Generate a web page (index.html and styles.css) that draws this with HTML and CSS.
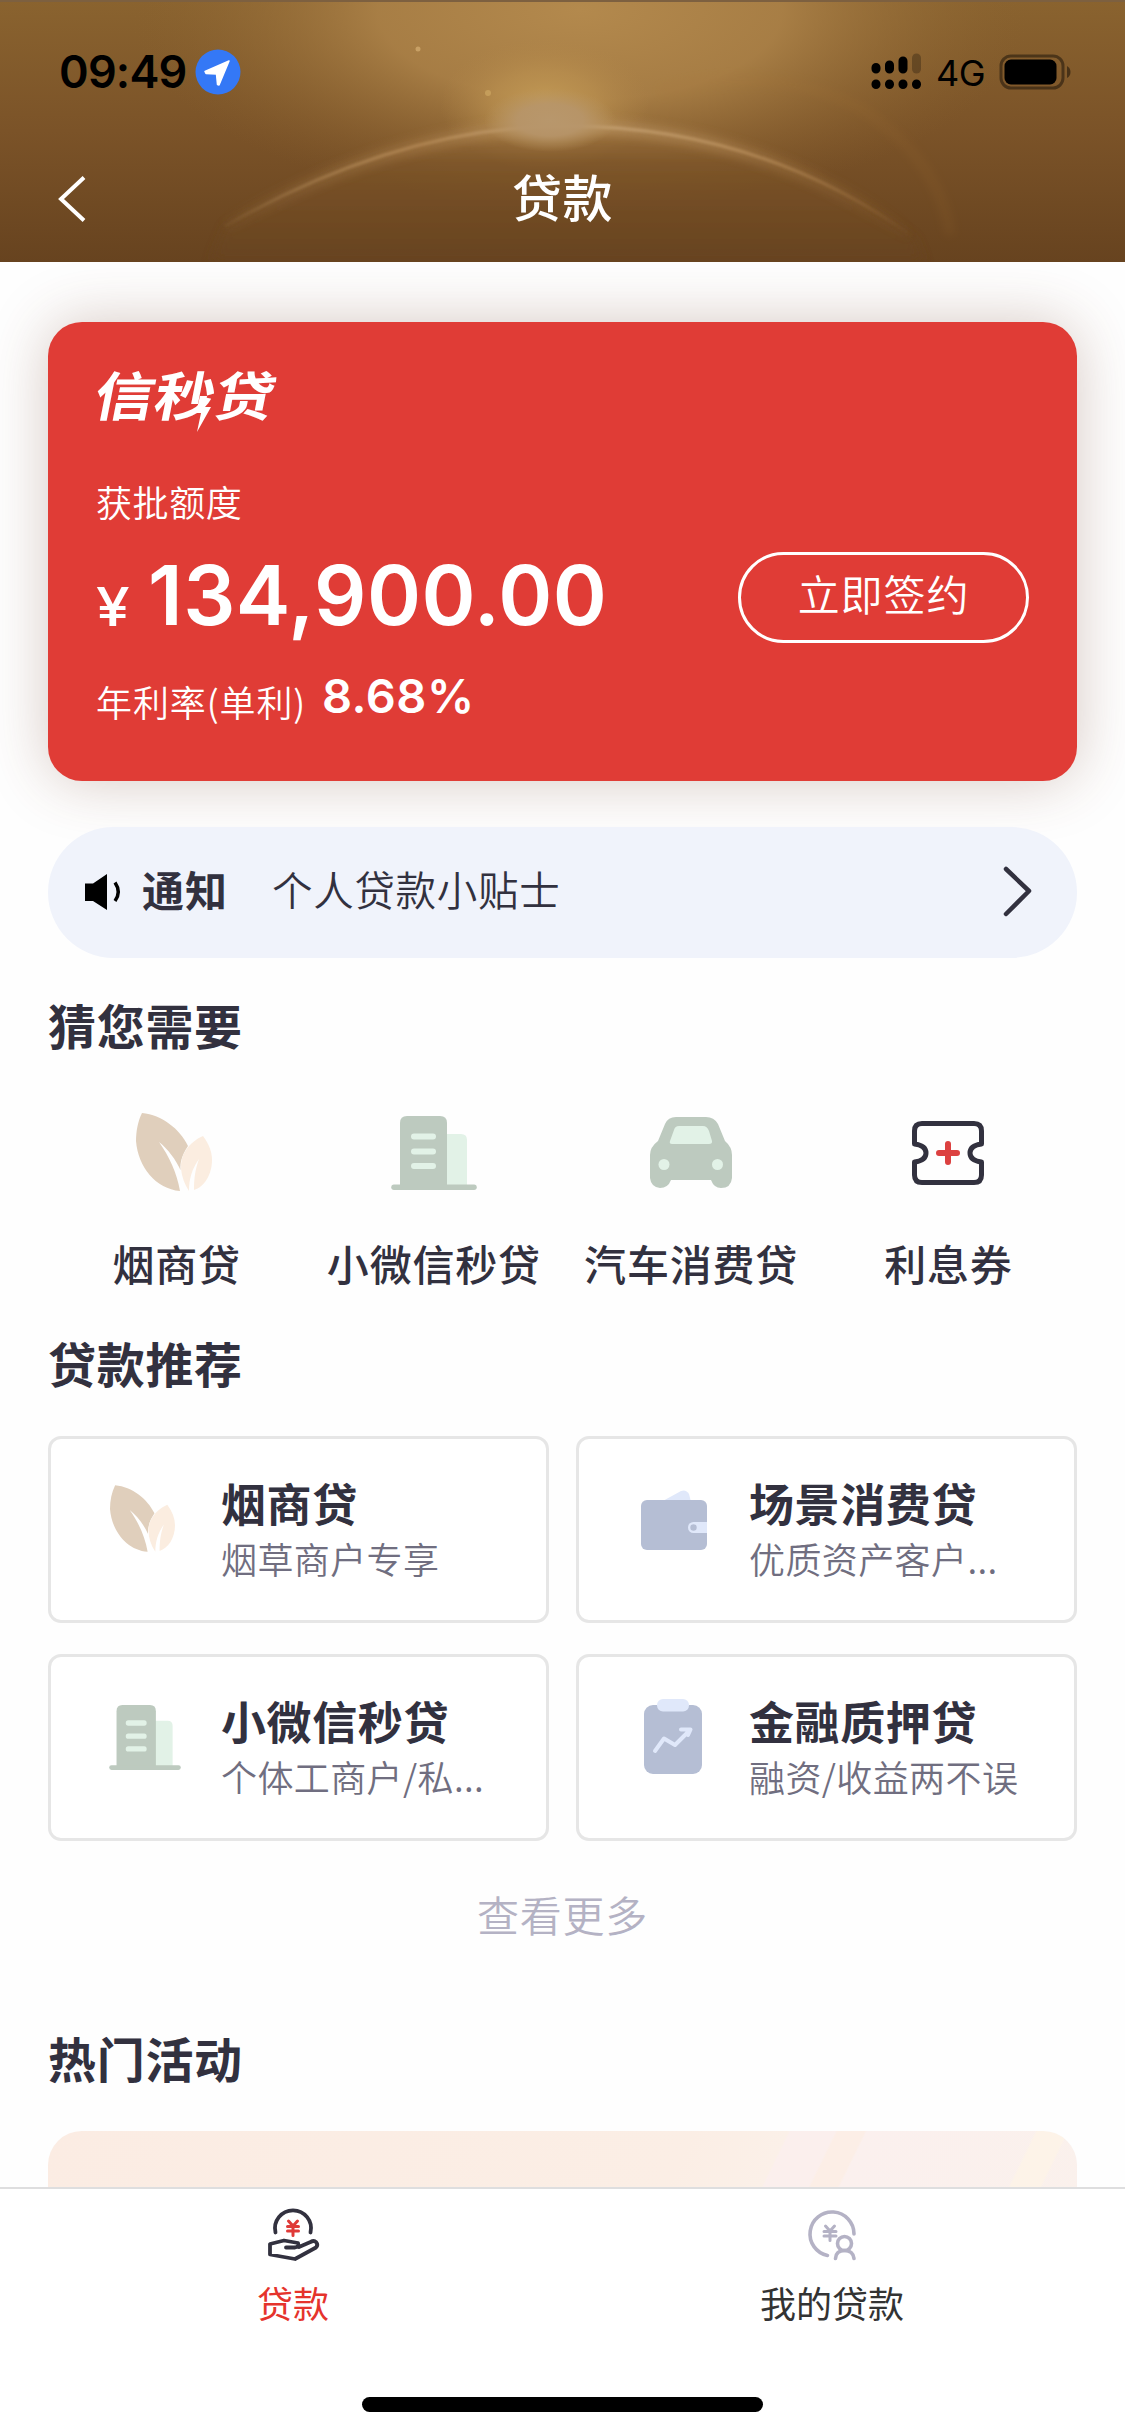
FILE: index.html
```html
<!DOCTYPE html>
<html lang="zh-CN">
<head>
<meta charset="utf-8">
<title>贷款</title>
<link rel="stylesheet" href="styles.css">
</head>
<body>
<svg width="0" height="0" class="defs" aria-hidden="true">
  <symbol id="leaf" viewBox="0 0 76 78">
    <path fill="#e0cfbc" d="M6 0C26 2 44 16 52 33C46 42 44 49 44.500 57C40 47 32 36 23 29C33 43 41 60 44 78C20 76 2 54 0 28C0 18 2 8 6 0Z"/>
    <path fill="#fbede0" d="M67 23C73 31 76 39 76 47C76 62 68 74 58 77C58 66 59 57 63 46C56 56 53 66 53 78C44 64 42 48 50 37C54 31 60 26 67 23Z"/>
  </symbol>
  <symbol id="building" viewBox="0 0 86 74">
    <path fill="#e2f2e7" d="M50 18H70Q76 18 76 24V70H50Z"/>
    <path fill="#bdcabf" d="M9 70V7Q9 0 16 0H49Q56 0 56 7V70Z"/>
    <path stroke="#bdcabf" stroke-width="5.500" stroke-linecap="round" d="M3 71.200H83"/>
    <path stroke="#e2f2e7" stroke-width="6" stroke-linecap="round" d="M23 20.500H42M23 35.500H42M23 50H42"/>
  </symbol>
</svg>

<header class="header">
  <svg class="sky" viewBox="0 0 1125 262" preserveAspectRatio="none" aria-hidden="true">
    <defs>
      <linearGradient id="base" x1="0" y1="0" x2="0" y2="1">
        <stop offset="0" stop-color="#8a632f"/><stop offset=".5" stop-color="#7b5328"/><stop offset="1" stop-color="#67431f"/>
      </linearGradient>
      <radialGradient id="top" gradientUnits="userSpaceOnUse" cx="0" cy="0" r="1" gradientTransform="translate(580 10) scale(450 200)">
        <stop offset="0" stop-color="#b3894d"/><stop offset=".45" stop-color="#ad8349" stop-opacity=".85"/><stop offset="1" stop-color="#8a622f" stop-opacity="0"/>
      </radialGradient>
      <radialGradient id="halo"><stop offset="0" stop-color="#c39b56"/><stop offset=".5" stop-color="#bb9150" stop-opacity=".65"/><stop offset="1" stop-color="#b08548" stop-opacity="0"/></radialGradient>
      <radialGradient id="sun"><stop offset="0" stop-color="#b8976c"/><stop offset=".5" stop-color="#b7956a" stop-opacity=".9"/><stop offset="1" stop-color="#b7935f" stop-opacity="0"/></radialGradient>
      <linearGradient id="planet" x1="0" y1="0" x2="0" y2="1"><stop offset="0" stop-color="#a0753f"/><stop offset=".28" stop-color="#7d5529"/><stop offset="1" stop-color="#67431f"/></linearGradient>
      <linearGradient id="rim" gradientUnits="userSpaceOnUse" x1="210" y1="0" x2="915" y2="0"><stop offset="0" stop-color="#c19a68" stop-opacity="0"/><stop offset=".3" stop-color="#b08552" stop-opacity=".8"/><stop offset=".5" stop-color="#c3a071"/><stop offset=".72" stop-color="#b58c5a" stop-opacity=".9"/><stop offset="1" stop-color="#a87945" stop-opacity="0"/></linearGradient>
      <filter id="soft" x="-10%" y="-30%" width="120%" height="160%"><feGaussianBlur stdDeviation="5"/></filter>
      <filter id="fine" x="-10%" y="-30%" width="120%" height="160%"><feGaussianBlur stdDeviation="1"/></filter>
    </defs>
    <rect width="1125" height="262" fill="url(#base)"/>
    <rect width="1125" height="262" fill="url(#top)"/>
    <ellipse cx="545" cy="104" rx="105" ry="66" fill="url(#halo)"/>
    <path d="M210 262L225 226Q400 126 565 126Q760 126 915 238L925 262Z" fill="url(#planet)" opacity=".7" filter="url(#soft)"/>
    <path d="M225 226Q400 126 565 126Q760 126 915 238" fill="none" stroke="url(#rim)" stroke-width="14" opacity=".55" filter="url(#soft)"/>
    <path d="M225 226Q400 126 565 126Q760 126 915 238" fill="none" stroke="url(#rim)" stroke-width="3.500" filter="url(#fine)"/>
    <ellipse cx="550" cy="120" rx="66" ry="32" fill="url(#sun)"/>
    <path d="M660 92Q770 62 860 108Q940 160 950 235" fill="none" stroke="#a87638" stroke-width="10" opacity=".12" filter="url(#soft)"/>
    <circle cx="418" cy="49" r="2.500" fill="#d0a96d" opacity=".8"/><circle cx="488" cy="93" r="3" fill="#cda662" opacity=".7"/>
    <rect width="1125" height="2" fill="#7d6040"/>
  </svg>
  <div class="status">
    <span class="clock">09:49</span>
    <svg class="locate" width="46" height="46" viewBox="0 0 46 46"><circle cx="23" cy="23" r="22.500" fill="#3478f6"/><path fill="#fff" stroke="#fff" stroke-width="1.500" stroke-linejoin="round" d="M34 12L10 22.500L11 24.500L21.500 25L22.500 35.500L24 36Z"/></svg>
    <svg class="signal" width="52" height="38" viewBox="0 0 52 38">
      <g stroke="#000" stroke-width="9" stroke-linecap="round"><path d="M5 14.500V16M18.500 12V16M32 8V16M5 31V31.500M18.500 31V31.500M32 31V31.500M45.500 31V31.500"/><path opacity=".25" d="M45.500 5V16"/></g>
    </svg>
    <span class="network">4G</span>
    <svg class="battery" width="74" height="36" viewBox="0 0 74 36"><rect x="2" y="2" width="62" height="32" rx="10" fill="none" stroke="#000" stroke-opacity=".42" stroke-width="3"/><rect x="5.500" y="5.500" width="52" height="25" rx="6.500"/><path fill-opacity=".45" d="M68 12Q71.500 14 71.500 18Q71.500 22 68 24Z"/></svg>
  </div>
  <div class="nav">
    <svg width="32" height="50" viewBox="0 0 32 50"><path d="M27 3.500L4 25L27 46.500" fill="none" stroke="#fff" stroke-width="4"/></svg>
    <h1 class="title">贷款</h1>
  </div>
</header>

<main class="main">
  <section class="credit">
    <div class="brand"><span class="brand-text">信秒贷</span><svg class="bolt" width="18" height="36" viewBox="0 0 18 36"><path fill="#fff" d="M5 0H12L10 11H16L2 36L6 17H1Z"/></svg></div>
    <p class="credit-label">获批额度</p>
    <div class="amount-row">
      <p class="amount"><span class="yen">¥</span><span class="sum">134,900.00</span></p>
      <button class="sign">立即签约</button>
    </div>
    <p class="rate"><span class="rate-label">年利率(单利)</span><span class="rate-value">8.68%</span></p>
  </section>

  <section class="notice">
    <svg class="speaker" width="38" height="38" viewBox="0 0 38 38"><path d="M0 10.500H8L22 1V37L8 28H0Z"/><path d="M30 9.500Q36.500 19 30 28" fill="none" stroke="#000" stroke-width="3.500"/></svg>
    <strong class="notice-tag">通知</strong>
    <span class="notice-text">个人贷款小贴士</span>
    <svg class="chevron" width="30" height="54" viewBox="0 0 30 54"><path d="M4 5L27 27L4 50" fill="none" stroke="#32313f" stroke-width="4.500" stroke-linecap="round" stroke-linejoin="round"/></svg>
  </section>

  <h2 class="heading">猜您需要</h2>
  <ul class="quick">
    <li class="quick-item"><span class="quick-icon"><svg class="q-leaf" width="76" height="78"><use href="#leaf"/></svg></span>烟商贷</li>
    <li class="quick-item"><span class="quick-icon"><svg width="86" height="74"><use href="#building"/></svg></span>小微信秒贷</li>
    <li class="quick-item"><span class="quick-icon"><svg width="82" height="71" viewBox="0 0 82 71">
      <path fill="#bdcabf" d="M26 0H56Q64 0 68 7L75 24Q82 30 82 38V61Q81 71 71 71Q64 71 61 63H21Q18 71 10 71Q1 70 0 61V38Q0 30 8 24L15 7Q18 0 26 0Z"/>
      <path fill="#e2f2e7" d="M29 9H53Q57 9 59 14L62 24Q62.500 27 59 27H22Q19 27 20 24L24 13Q25 9 29 9Z"/><circle cx="14" cy="47.500" r="5.500" fill="#e2f2e7"/><circle cx="67.500" cy="47.500" r="5.500" fill="#e2f2e7"/></svg></span>汽车消费贷</li>
    <li class="quick-item"><span class="quick-icon"><svg width="72" height="64" viewBox="0 0 72 64">
      <path fill="none" stroke="#32313f" stroke-width="5" stroke-linejoin="round" d="M10 2.500H62Q69.500 2.500 69.500 10V23Q58 24.500 58 32Q58 39.500 69.500 41V54Q69.500 61.500 62 61.500H10Q2.500 61.500 2.500 54V41Q14 39.500 14 32Q14 24.500 2.500 23V10Q2.500 2.500 10 2.500Z"/>
      <path stroke="#dc4140" stroke-width="6" stroke-linecap="round" d="M27 32H45M36 23V41"/></svg></span>利息券</li>
  </ul>

  <h2 class="heading heading-rec">贷款推荐</h2>
  <div class="products">
    <article class="product"><span class="product-icon"><svg class="p-leaf" width="65" height="67"><use href="#leaf"/></svg></span>
      <div class="product-body"><h3 class="product-name">烟商贷</h3><p class="product-desc">烟草商户专享</p></div></article>
    <article class="product"><span class="product-icon"><svg class="p-wallet" width="66" height="60" viewBox="0 0 66 60"><path fill="#e0e8fa" d="M20 12L40 1Q45-1 48 4L50 12Z"/><rect y="10" width="66" height="50" rx="6" fill="#b5bed4"/><path fill="#e0e8fa" d="M66 32H52.500A5.500 5.500 0 0 0 52.500 43H66Z"/><circle cx="52.500" cy="37.500" r="3.200" fill="#b5bed4"/></svg></span>
      <div class="product-body"><h3 class="product-name">场景消费贷</h3><p class="product-desc">优质资产客户...</p></div></article>
    <article class="product"><span class="product-icon"><svg class="p-building" width="72" height="65" viewBox="0 0 86 74" preserveAspectRatio="none"><use href="#building" width="86" height="74"/></svg></span>
      <div class="product-body"><h3 class="product-name">小微信秒贷</h3><p class="product-desc">个体工商户/私...</p></div></article>
    <article class="product"><span class="product-icon"><svg class="p-board" width="58" height="75" viewBox="0 0 58 75"><rect y="6" width="58" height="69" rx="9" fill="#b5bed4"/><rect x="13" width="32" height="12.500" rx="6" fill="#e0e8fa"/><path fill="none" stroke="#e0e8fa" stroke-width="4" stroke-linecap="round" stroke-linejoin="round" d="M11 52L20 39.500L31 46L46 31M37 30.500H46.500L44 36"/></svg></span>
      <div class="product-body"><h3 class="product-name">金融质押贷</h3><p class="product-desc">融资/收益两不误</p></div></article>
  </div>
  <p class="more">查看更多</p>

  <h2 class="heading heading-hot">热门活动</h2>
  <div class="banner"></div>
</main>

<footer class="tabbar">
  <div class="tabs">
    <div class="tab tab-on">
      <svg width="54" height="54" viewBox="0 0 54 54"><g fill="none" stroke="#32313f" stroke-width="3.800" stroke-linecap="round" stroke-linejoin="round"><path d="M9.500 25.500A18 18 0 1 1 44.500 25.500"/><path d="M20 40.500H29Q33.500 39.500 32 36L18 33.500L4 37V47.500L29 52L50 40.500Q52.500 38 50 35Q48 33 44.500 35L33 40"/></g><path fill="none" stroke="#df3a38" stroke-width="3" stroke-linecap="round" d="M22.500 14L27 19L31.500 14M21.500 19.500H32.500M21.500 24H32.500M27 19V28.500"/></svg>
      <span class="tab-label">贷款</span>
    </div>
    <div class="tab">
      <svg width="54" height="54" viewBox="0 0 54 54"><g fill="none" stroke="#b4b2c5" stroke-width="3.600" stroke-linecap="round"><path d="M49 27A22 22 0 1 0 22.500 48.500"/><circle cx="39.500" cy="36.500" r="7"/><path d="M30.500 51.500Q31 43.500 39.500 43.500Q48 43.500 49 51.500"/><path stroke-width="3" d="M20.500 19L25 24L29.500 19M19 24.500H31M19 29H31M25 24V33.500"/></g></svg>
      <span class="tab-label">我的贷款</span>
    </div>
  </div>
  <div class="home"></div>
</footer>
</body>
</html>
```
FILE: styles.css
```css
* { box-sizing: border-box; margin: 0; padding: 0; }

body {
  width: 1125px;
  height: 2435px;
  display: flex;
  flex-direction: column;
  overflow: hidden;
  background: #fefefe;
  color: #32313f;
  font-family: "Noto Sans CJK SC", sans-serif;
  letter-spacing: 0.6px;
}
svg { display: block; flex: none; overflow: visible; }
.defs { position: absolute; }

.header { position: relative; flex: none; height: 262px; }
.sky { position: absolute; inset: 0; width: 1125px; height: 262px; overflow: hidden; }
.status, .nav { position: relative; display: flex; align-items: center; }
.status { height: 144px; padding-left: 59px; color: #000; font-family: Inter, sans-serif; }
.clock { width: 137px; padding-bottom: 1px; font-size: 45px; font-weight: 600; letter-spacing: -0.8px; }
.locate { margin-left: -1px; }
.signal { margin-left: 630px; }
.network { width: 76px; padding: 2px 0 0 13px; font-size: 36px; font-weight: 400; letter-spacing: -0.6px; }
.battery { margin-top: -1px; }
.nav { height: 110px; padding-left: 57px; }
.title { margin-left: 423px; color: #fff; font-size: 50px; font-weight: 500; line-height: 70px; letter-spacing: 0.6px; transform: translateY(-4px); }

.main { flex: none; height: 1925px; overflow: hidden; padding: 60px 48px 0; }

.credit {
  height: 459px;
  padding: 36px 48px 0;
  border-radius: 34px;
  background: #e03c36;
  box-shadow: 0 0 60px rgba(110, 60, 40, 0.28);
  color: #fff;
}
.brand { position: relative; width: 200px; height: 70px; }
.brand-text { display: block; font-size: 60px; line-height: 70px; font-weight: 700; letter-spacing: 0; transform: skewX(-11deg) scaleY(0.88); }
.bolt { position: absolute; left: 99px; top: 38px; }
.credit-label { margin-top: 48px; font-size: 36px; line-height: 50px; font-weight: 350; }
.amount-row { display: flex; justify-content: space-between; margin-top: 26px; }
.amount { display: flex; align-items: baseline; height: 90px; line-height: 87px; font-family: Inter, sans-serif; }
.yen { width: 52px; font-size: 54px; font-weight: 500; letter-spacing: 0; transform: translateY(1px) scaleX(1.12); transform-origin: 0 50%; }
.sum { font-size: 82px; font-weight: 600; letter-spacing: 0.5px; }
.sign {
  width: 291px; height: 91px; padding-bottom: 10px;
  border: 3px solid #fff; border-radius: 46px; background: none;
  color: #fff; font: 350 42px "Noto Sans CJK SC", sans-serif; letter-spacing: 0.9px;
}
.rate { display: flex; align-items: center; margin-top: 25px; height: 60px; }
.rate-label { width: 226px; padding-top: 6px; font-size: 36px; line-height: 50px; font-weight: 350; letter-spacing: 0.9px; }
.rate-value { padding-bottom: 6px; font-family: Inter, sans-serif; font-size: 47px; font-weight: 600; letter-spacing: 0.5px; }

.notice {
  display: flex; align-items: center;
  height: 131px; margin-top: 46px; padding: 0 45px 0 37px;
  border-radius: 66px; background: #f0f3fb; position: relative;
}
.speaker { margin-top: -1px; }
.chevron { margin-top: -3px; }
.notice-tag { margin-left: 19px; font-size: 42px; line-height: 60px; font-weight: 600; letter-spacing: 1px; transform: translateY(-4px); }
.notice-text { flex: 1; margin-left: 44px; font-size: 40.500px; line-height: 60px; font-weight: 350; letter-spacing: 0.7px; transform: translateY(-4px); }

.heading { margin-top: 31px; font-size: 48px; line-height: 70px; font-weight: 600; letter-spacing: 0.7px; }
.quick { display: grid; grid-template-columns: repeat(4, 1fr); margin-top: 32px; list-style: none; }
.quick-item { display: flex; flex-direction: column; align-items: center; height: 206px; font-size: 42px; line-height: 60px; font-weight: 500; letter-spacing: 0.8px; white-space: nowrap; }
.quick-icon { display: flex; align-items: center; height: 123px; margin-bottom: 19px; }
.q-leaf { margin: -2px 0 0 -6px; }

.heading-rec { margin-top: 30px; }
.products { display: grid; grid-template-columns: 501px 501px; gap: 31px 27px; margin-top: 39px; }
.product { display: flex; height: 187px; padding: 34px 0 0 42px; border: 3px solid #e6e6e6; border-radius: 13px; background: #fff; }
.product-icon { display: flex; align-items: center; justify-content: center; width: 108px; height: 92px; margin-right: 20px; }
.p-leaf { margin: -1px 0 0 -10px; }
.p-wallet { margin: 2px 0 0 -3px; }
.p-building { margin: 0 0 0 -4px; }
.p-board { margin: -2px 0 0 -4px; }
.product-name { font-size: 45px; line-height: 60px; font-weight: 600; letter-spacing: 0.6px; }
.product-desc { font-size: 36px; line-height: 50px; font-weight: 350; letter-spacing: 0.4px; color: #706e80; }
.more { margin-top: 45px; text-align: center; font-size: 42px; line-height: 56px; font-weight: 350; letter-spacing: 0.8px; color: #b4b2c4; }

.heading-hot { margin-top: 80px; }
.banner {
  height: 300px; margin-top: 39px; border-radius: 34px;
  background:
    linear-gradient(116deg, transparent 84%, #fdf3e8 84.200%, #fdf3e8 86.700%, transparent 86.900%),
    linear-gradient(116deg, #fbece3, #fbeee5 55%, #fbf0e8 63%, #fbefed 63.200%, #fbefed 67%, #fceee6 67.200%, #fceee6 69.500%, #fbf0ee 69.700%, #faf1eb);
}

.tabbar { flex: none; display: flex; flex-direction: column; align-items: center; height: 248px; border-top: 2px solid #dededf; background: #fff; }
.tabs { display: flex; width: 1078px; height: 208px; padding-top: 18px; }
.tab { flex: 1; display: flex; flex-direction: column; align-items: center; color: #333; }
.tab-label { margin-top: 14px; font-size: 36px; line-height: 54px; font-weight: 400; letter-spacing: 0; }
.tab-on .tab-label { color: #e5332c; }
.home { width: 401px; height: 15px; border-radius: 8px; background: #000; }
```
